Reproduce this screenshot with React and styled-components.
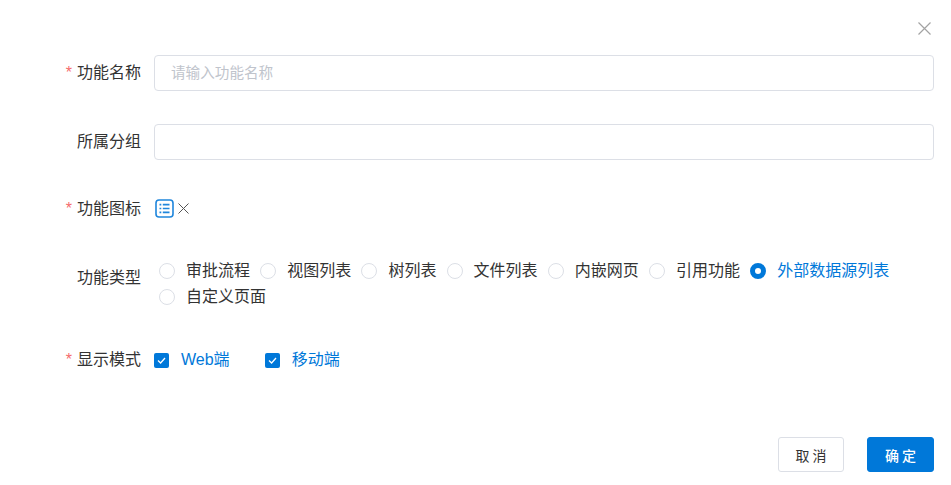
import React from 'react';
import styled, { createGlobalStyle } from 'styled-components';

const blue = '#0078d9';

const Global = createGlobalStyle`
	html, body {
		margin: 0;
		background: #fff;
	}
	* {
		box-sizing: border-box;
	}
`;

const Dialog = styled.div`
	width: 951px;
	height: 485px;
	display: flex;
	flex-direction: column;
	padding: 21px 17px 13px 0;
	font-family: "Liberation Sans", "Noto Sans CJK SC", sans-serif;
	font-size: 16px;
	color: #333;
	background: #fff;
`;

const CloseBar = styled.div`
	height: 34px;
	display: flex;
	justify-content: flex-end;
	padding-right: 2px;
`;

const CloseIcon = styled.svg`
	width: 15px;
	height: 15px;
	stroke: #a3a3a3;
	stroke-width: 1.2;
`;

const Form = styled.form`
	flex: 1;
	display: flex;
	flex-direction: column;
`;

const Row = styled.div`
	display: flex;
	align-items: ${p => (p.$top ? 'flex-start' : 'center')};
	min-height: ${p => p.$height || 36}px;
	margin-bottom: ${p => p.$gap || 33}px;
`;

const Label = styled.label`
	width: 141px;
	margin-right: 13px;
	margin-top: ${p => (p.$top ? 9 : 0)}px;
	flex: none;
	text-align: right;
	line-height: 22px;
	white-space: nowrap;
	&::before {
		content: ${p => (p.$required ? '"*"' : '""')};
		color: #f56c6c;
		margin-right: 5px;
	}
`;

const Input = styled.input`
	flex: 1;
	height: 36px;
	border: 1px solid #dcdfe6;
	border-radius: 4px;
	padding: 0 16px;
	font-family: inherit;
	font-size: 14.6px;
	outline: none;
	&::placeholder {
		color: #c0c4cc;
	}
`;

const IconWrap = styled.div`
	display: flex;
	align-items: center;
	gap: 3px;
	padding: 0 0 1px 1px;
`;

const RadioGroup = styled.div`
	flex: 1;
	display: flex;
	flex-wrap: wrap;
	max-width: 760px;
`;

const RadioItem = styled.label`
	display: flex;
	align-items: center;
	height: 26px;
	padding: 0 5.2px 0 5px;
	color: ${p => (p.$checked ? blue : '#333')};
	white-space: nowrap;
`;

const RadioDot = styled.span`
	width: 16px;
	height: 16px;
	margin-right: 11px;
	border-radius: 50%;
	background: #fff;
	border: ${p => (p.$checked ? `5px solid ${blue}` : '1px solid #dcdfe6')};
`;

const OptionText = styled.span`
	margin-bottom: 4px;
`;

const CheckGroup = styled.div`
	display: flex;
	gap: 35px;
`;

const CheckItem = styled.label`
	display: flex;
	align-items: center;
	gap: 12px;
	color: ${blue};
`;

const CheckBox = styled.span`
	width: 15px;
	height: 15px;
	display: flex;
	align-items: center;
	justify-content: center;
	border-radius: 2px;
	background: ${blue};
`;

const Footer = styled.div`
	display: flex;
	justify-content: flex-end;
	gap: 23px;
`;

const Button = styled.button`
	width: ${p => (p.$primary ? 67 : 66)}px;
	height: 35px;
	padding: 0;
	border-radius: 3px;
	border: 1px solid ${p => (p.$primary ? blue : '#dcdfe6')};
	background: ${p => (p.$primary ? blue : '#fff')};
	color: ${p => (p.$primary ? '#fff' : '#333')};
	font-family: inherit;
	font-size: 14px;
	font-weight: ${p => (p.$primary ? 500 : 400)};
	letter-spacing: 3px;
	text-indent: 3px;
`;

const types = ['审批流程', '视图列表', '树列表', '文件列表', '内嵌网页', '引用功能', '外部数据源列表', '自定义页面'];

const Tick = () => (
	<svg width="11" height="11" viewBox="0 0 11 11" fill="none" stroke="#fff" strokeWidth="1.3">
		<path d="M2 5.6 L4.6 8 L9 3" />
	</svg>
);

const App = () => (
	<Dialog>
		<Global />
		<CloseBar>
			<CloseIcon viewBox="0 0 15 15">
				<path d="M1.5 1.5 L13.5 13.5 M13.5 1.5 L1.5 13.5" />
			</CloseIcon>
		</CloseBar>
		<Form>
			<Row>
				<Label $required>功能名称</Label>
				<Input placeholder="请输入功能名称" />
			</Row>
			<Row>
				<Label>所属分组</Label>
				<Input />
			</Row>
			<Row $height={32} $gap={33}>
				<Label $required>功能图标</Label>
				<IconWrap>
					<svg width="19" height="19" viewBox="0 0 19 19" fill="none">
						<rect x="1" y="1" width="17" height="17" rx="3" stroke="#1f86dc" strokeWidth="1.6" />
						<path d="M4.5 5.7h1.8M7.8 5.7h6.7M4.5 9.5h1.8M7.8 9.5h6.7M4.5 13.3h1.8M7.8 13.3h6.7" stroke="#1f86dc" strokeWidth="1.7" />
					</svg>
					<svg width="13" height="13" viewBox="0 0 13 13" stroke="#555" strokeWidth="1">
						<path d="M1.5 1.5 L11.5 11.5 M11.5 1.5 L1.5 11.5" />
					</svg>
				</IconWrap>
			</Row>
			<Row $height={52} $gap={36} $top>
				<Label $top>功能类型</Label>
				<RadioGroup>
					{types.map(t => (
						<RadioItem key={t} $checked={t === '外部数据源列表'}>
							<RadioDot $checked={t === '外部数据源列表'} />
							<OptionText>{t}</OptionText>
						</RadioItem>
					))}
				</RadioGroup>
			</Row>
			<Row $height={26} $gap={0}>
				<Label $required>显示模式</Label>
				<CheckGroup>
					<CheckItem>
						<CheckBox>
							<Tick />
						</CheckBox>
						<OptionText>Web端</OptionText>
					</CheckItem>
					<CheckItem>
						<CheckBox>
							<Tick />
						</CheckBox>
						<OptionText>移动端</OptionText>
					</CheckItem>
				</CheckGroup>
			</Row>
		</Form>
		<Footer>
			<Button type="button">取消</Button>
			<Button type="button" $primary>
				确定
			</Button>
		</Footer>
	</Dialog>
);

export default App;
